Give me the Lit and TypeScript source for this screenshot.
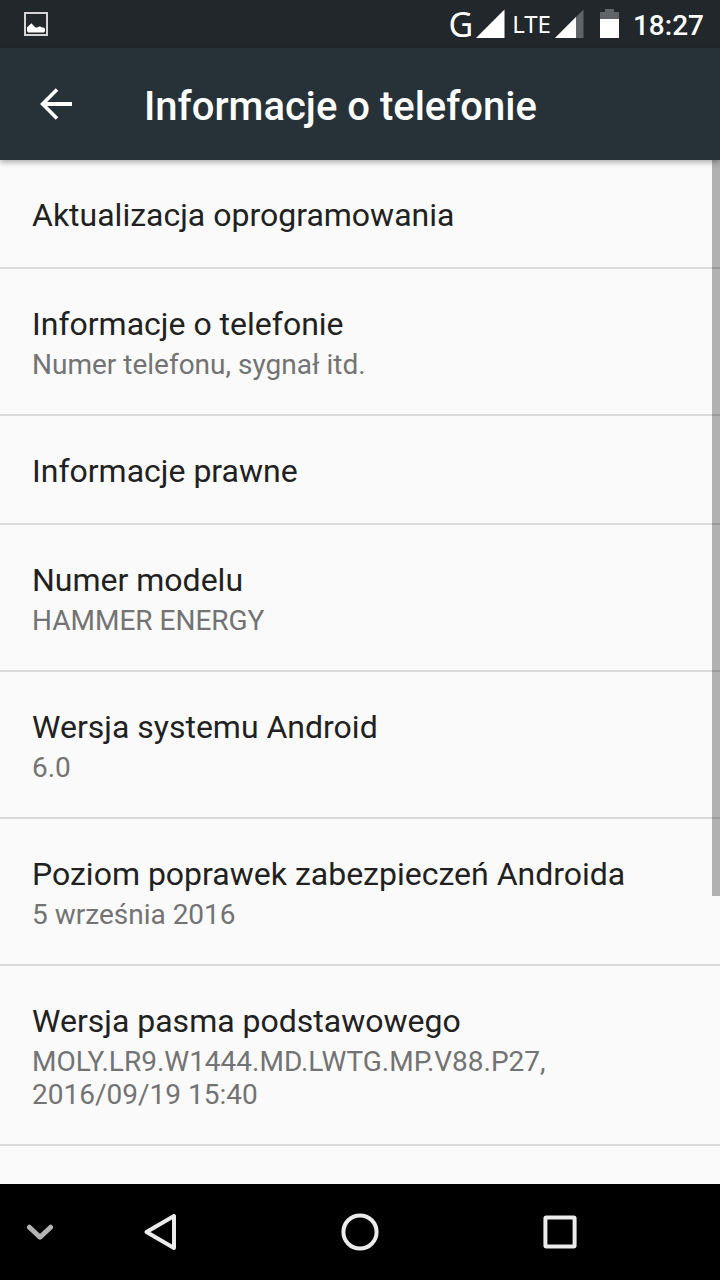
import { LitElement, html, css, nothing } from "lit";
import { customElement, property } from "lit/decorators.js";

interface Entry {
  title: string;
  summary?: string;
}

const ENTRIES: Entry[] = [
  { title: "Aktualizacja oprogramowania" },
  { title: "Informacje o telefonie", summary: "Numer telefonu, sygnał itd." },
  { title: "Informacje prawne" },
  { title: "Numer modelu", summary: "HAMMER ENERGY" },
  { title: "Wersja systemu Android", summary: "6.0" },
  { title: "Poziom poprawek zabezpieczeń Androida", summary: "5 września 2016" },
  {
    title: "Wersja pasma podstawowego",
    summary: "MOLY.LR9.W1444.MD.LWTG.MP.V88.P27,\n2016/09/19 15:40",
  },
];

@customElement("status-bar")
export class StatusBar extends LitElement {
  static styles = css`
    :host {
      display: flex;
      align-items: center;
      height: 48px;
      flex: none;
      padding: 0 16px 0 24px;
      background: #22272b;
      color: #fff;
    }
    svg {
      display: block;
      flex: none;
    }
    .spacer {
      flex: 1;
    }
    .network {
      font-family: "Noto Sans", "Open Sans", sans-serif;
      line-height: 48px;
    }
    .edge {
      font-size: 34px;
      margin-right: 3px;
    }
    .lte {
      font-size: 24px;
      margin: 0 4px 0 7px;
    }
    .battery {
      margin-left: 16px;
    }
    .clock {
      margin-left: 14px;
      padding-top: 4px;
      font-size: 28px;
      font-weight: 500;
      line-height: 32px;
    }
  `;

  render() {
    return html`
      <svg width="24" height="24" viewBox="0 0 24 24" role="img" aria-label="Obraz">
        <rect x="1" y="1" width="22" height="22" fill="none" stroke="#d6d3d4" stroke-width="2" />
        <path
          d="M3 19V15.5L6 12.5L7.5 11.3L9 13L11.5 15.4H13L16 14.2L18 15.4L20 15.6L21 17V19L20 20.4H4Z"
          fill="#fff"
        />
      </svg>
      <span class="spacer"></span>
      <span class="network edge">G</span>
      <svg width="29" height="30" viewBox="0 0 29 30" aria-hidden="true">
        <path d="M28.5 0.5V29H0Z" fill="#fff" />
      </svg>
      <span class="network lte">LTE</span>
      <svg width="29" height="30" viewBox="0 0 29 30" aria-hidden="true">
        <path d="M28.5 0.5V29H0Z" fill="#616466" />
        <path d="M21 8V29H0Z" fill="#fff" />
      </svg>
      <svg class="battery" width="19" height="30" viewBox="0 0 19 30" role="img" aria-label="Bateria">
        <path d="M5 0H14V3H19V10H0V3H5Z" fill="#616466" />
        <path d="M0 10H19V29H0Z" fill="#fff" />
      </svg>
      <time class="clock">18:27</time>
    `;
  }
}

@customElement("app-bar")
export class AppBar extends LitElement {
  @property() heading = "";

  static styles = css`
    :host {
      display: flex;
      align-items: center;
      flex: none;
      height: 112px;
      background: #273238;
      color: #fff;
      position: relative;
      z-index: 2;
      box-shadow: 0 2px 6px rgba(0, 0, 0, 0.35);
    }
    .back {
      display: grid;
      place-items: center;
      width: 112px;
      height: 112px;
      margin-right: 32px;
      padding: 0;
      border: 0;
      background: none;
    }
    .heading {
      margin: 0;
      font-size: 40px;
      font-weight: 500;
      line-height: 48px;
      padding-top: 6px;
    }
  `;

  render() {
    return html`
      <button class="back" type="button" aria-label="Wstecz">
        <svg width="32" height="32" viewBox="0 0 32 32" fill="none" stroke="#fff" stroke-width="4">
          <path d="M32 16H4" />
          <path d="M17 1.5L2.6 16L17 30.5" stroke-width="3.6" />
        </svg>
      </button>
      <h1 class="heading">${this.heading}</h1>
    `;
  }
}

@customElement("settings-list")
export class SettingsList extends LitElement {
  @property({ attribute: false }) entries: Entry[] = [];

  static styles = css`
    :host {
      display: block;
      flex: 1;
      min-height: 0;
      overflow: hidden;
      position: relative;
      background: #fafafa;
    }
    .list {
      list-style: none;
      margin: 0;
      padding: 0;
    }
    .row {
      display: block;
      box-sizing: border-box;
      width: 100%;
      padding: 36px 32px 33px;
      border: 0;
      border-bottom: 2px solid #dadada;
      background: none;
      font: inherit;
      text-align: left;
    }
    .title,
    .summary {
      display: block;
    }
    .title {
      font-size: 32px;
      line-height: 38px;
      color: #212121;
    }
    .summary {
      margin-top: 5px;
      font-size: 28px;
      line-height: 33px;
      color: #737373;
      white-space: pre-line;
    }
    .scrollbar {
      position: absolute;
      top: 0;
      right: 0;
      width: 8px;
      background: rgba(0, 0, 0, 0.29);
    }
  `;

  render() {
    return html`
      <ul class="list">
        ${this.entries.map(
          (entry) => html`
            <li>
              <button class="row" type="button">
                <span class="title">${entry.title}</span>
                ${entry.summary ? html`<span class="summary">${entry.summary}</span>` : nothing}
              </button>
            </li>
          `
        )}
      </ul>
      <div class="scrollbar" style="height: ${(23 / 32) * 100}%"></div>
    `;
  }
}

@customElement("nav-bar")
export class NavBar extends LitElement {
  static styles = css`
    :host {
      display: grid;
      grid-template-columns: 1fr 2fr 3fr 2fr 1fr;
      flex: none;
      height: 96px;
      background: #000;
    }
    .key {
      display: grid;
      place-items: center;
      padding: 0;
      border: 0;
      background: none;
    }
  `;

  render() {
    return html`
      <button class="key" type="button" aria-label="Ukryj pasek">
        <svg width="28" height="18" viewBox="0 0 28 18" fill="none" stroke="#b3b3b3" stroke-width="5">
          <path d="M3.4 4.2L14 14.2L24.6 4.2" stroke-linecap="round" stroke-linejoin="round" />
        </svg>
      </button>
      <button class="key" type="button" aria-label="Wstecz">
        <svg width="34" height="40" viewBox="0 0 34 40" fill="none" stroke="#ececec" stroke-width="4">
          <path d="M31 4V36L3.5 20Z" stroke-linejoin="round" />
        </svg>
      </button>
      <button class="key" type="button" aria-label="Ekran główny">
        <svg width="40" height="40" viewBox="0 0 40 40" fill="none" stroke="#ececec" stroke-width="4">
          <circle cx="20" cy="20" r="16.6" />
        </svg>
      </button>
      <button class="key" type="button" aria-label="Ostatnie">
        <svg width="34" height="34" viewBox="0 0 34 34" fill="none" stroke="#ececec" stroke-width="4">
          <rect x="2.4" y="2.4" width="29.2" height="29.2" rx="1" />
        </svg>
      </button>
    `;
  }
}

@customElement("app-root")
export class AppRoot extends LitElement {
  static styles = css`
    :host {
      display: flex;
      flex-direction: column;
      height: 100vh;
      font-family: Roboto, "Noto Sans", sans-serif;
      background: #fafafa;
    }
  `;

  render() {
    return html`
      <status-bar></status-bar>
      <app-bar heading="Informacje o telefonie"></app-bar>
      <settings-list .entries=${ENTRIES}></settings-list>
      <nav-bar></nav-bar>
    `;
  }
}
